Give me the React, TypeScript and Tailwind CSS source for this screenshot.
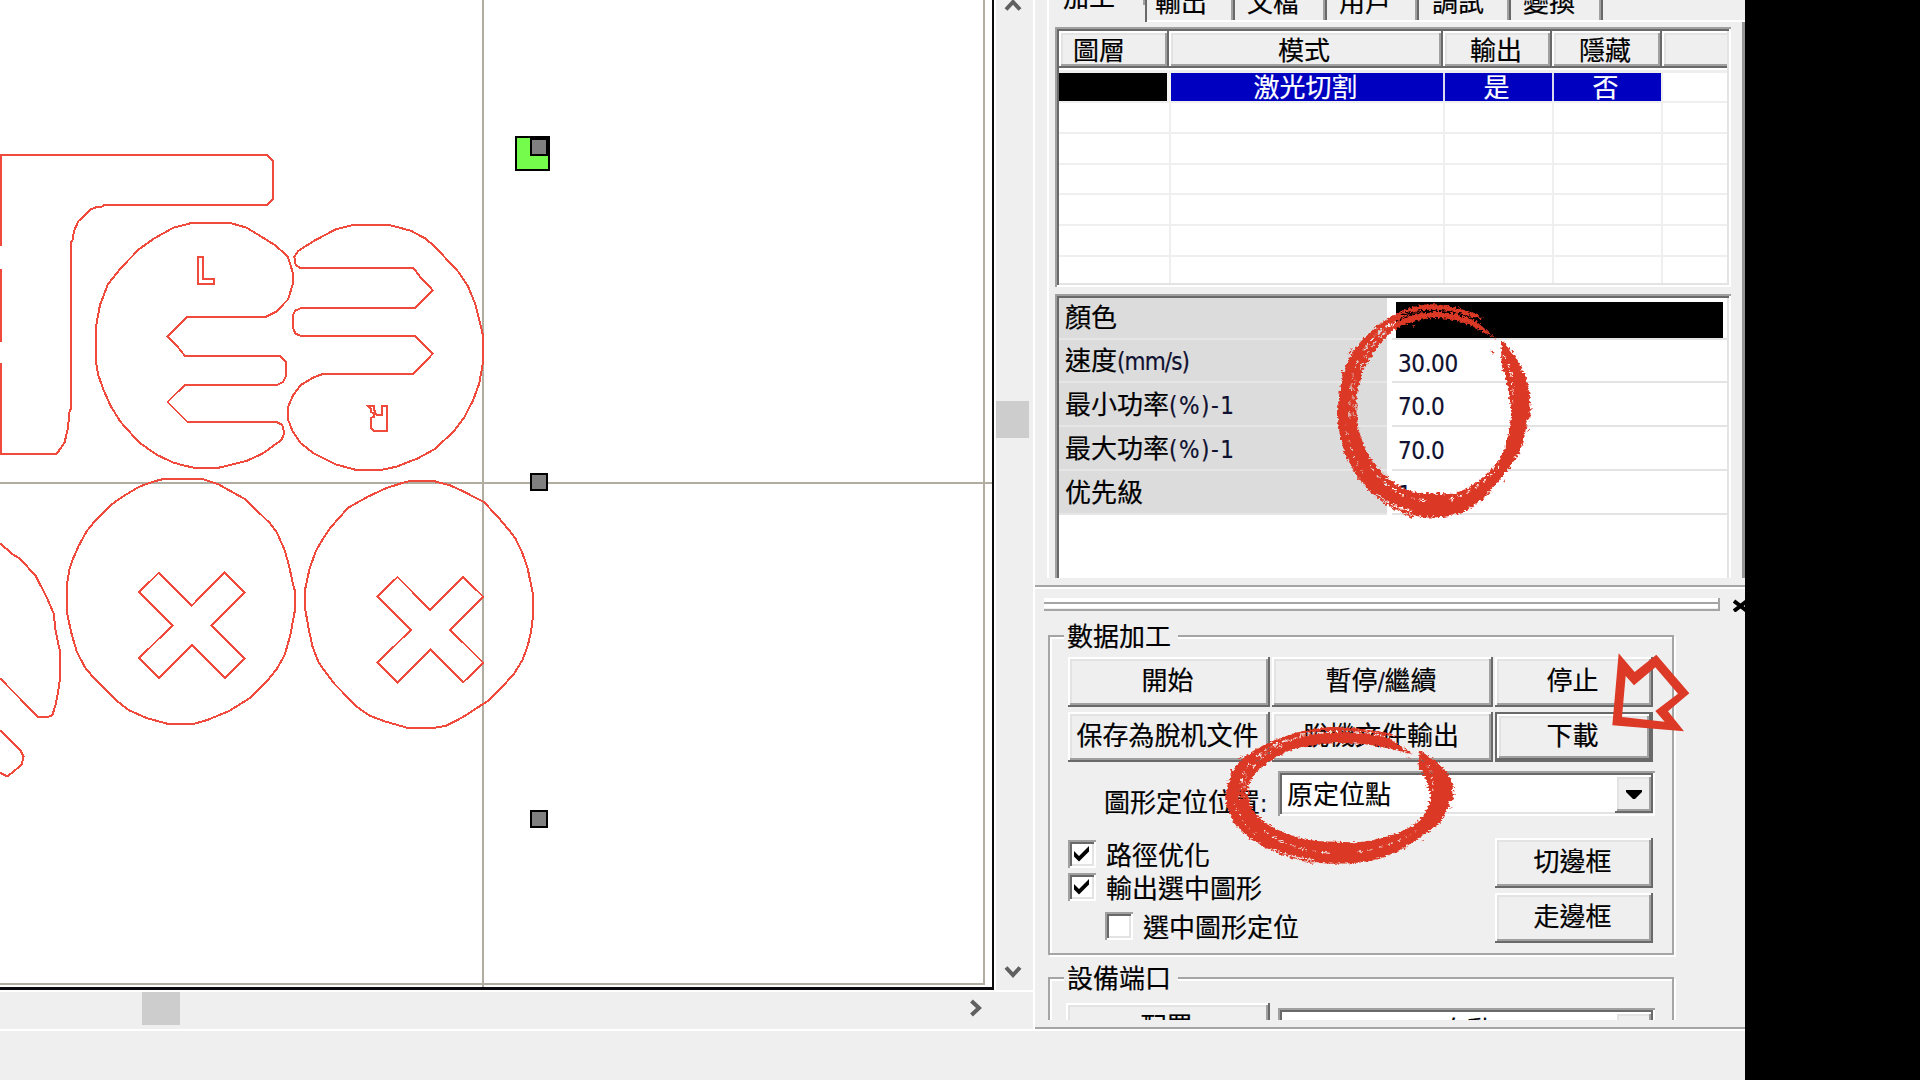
import React from "react";

type Pt = [number, number];

const RAISED =
  "shadow-[inset_-2px_-2px_#696969,inset_2px_2px_#ffffff,inset_-4px_-4px_#a0a0a0,inset_4px_4px_#e3e3e3]";
const SUNKEN =
  "shadow-[inset_2px_2px_#a0a0a0,inset_-2px_-2px_#ffffff,inset_4px_4px_#696969,inset_-4px_-4px_#e3e3e3]";

/* ---------- drawing canvas ---------- */

function Handle({ className }: { className: string }) {
  return <div className={`absolute h-[18px] w-[18px] border-[2.5px] border-black bg-[#808080] ${className}`} />;
}

function Drawing() {
  const ns = { vectorEffect: "non-scaling-stroke" as const };
  const cross =
    "M445,338 L537,437 L629,338 L685,397 L592,496 L685,595 L629,654 L537,555 L445,654 L389,595 L483,496 L389,397Z";
  return (
    <svg
      width="992"
      height="987"
      viewBox="0 0 992 987"
      className="block"
      fill="none"
      stroke="#f04a3c"
      strokeWidth="2"
      shapeRendering="crispEdges"
    >
      <g stroke="#b1ada1" strokeWidth="2">
        <path d="M483,0V987M0,483H992M984,0V984H0" />
      </g>
      <g transform="matrix(0.357143 0 0 0.333333 0 130)">
        <path {...ns} d="M0,346 H4 V74 H747 L765,93 V207 L747,226 H291 L285,230 L268,232 L255,238 L220,273 L207,303 L204,328 L200,335 V835 L195,842 L190,895 L181,937 L163,965 L155,973 H4 V703 H0 M0,421 H4 V633 H0" />
        <path {...ns} d="M746,560 H524 L469,619 L492,643 L518,678 H785 L801,697 V738 L792,756 L778,764 H518 L469,816 L524,875 H772 L790,884 L796,910 L788,930 L735,971 L690,993 L625,1010 L613,1013 H542 L510,1005 L486,998 L440,975 L390,938 L337,875 L310,828 L290,780 L275,735 L268,690 V595 L272,570 L280,525 L302,463 L340,412 L390,357 L432,325 L486,293 L540,278 H642 L690,293 L735,322 L772,347 L806,380 L819,425 V465 L807,508 L772,546 Z" />
        <path {...ns} d="M842,415 L828,405 L824,380 L836,362 L880,332 L940,298 L988,285 H1090 L1150,302 L1190,325 L1216,348 L1283,425 L1310,468 L1330,520 L1342,570 L1352,615 V700 L1342,760 L1325,810 L1300,862 L1270,905 L1216,958 L1170,985 L1110,1010 L1070,1019 H994 L940,1003 L880,971 L842,940 L820,905 L807,870 V830 L820,797 L842,765 L880,741 L907,731 H1158 L1212,671 L1163,619 H844 L827,610 L819,590 V557 L827,542 L844,534 H1163 L1212,481 L1180,445 L1158,415 Z" />
        <path {...ns} d="M555,382 H569 V448 H600 V462 H555 Z" />
        <path {...ns} d="M1031,829 H1046 V838 L1050,844 V850 L1056,856 H1070 V829 H1084 V902 H1047 L1039,895 V864 L1048,860 V852 L1040,846 L1040,838 Z" />
      </g>
      <g transform="matrix(0.357143 0 0 0.333333 0 460)">
        <path {...ns} d="M462,56 H564 L610,72 L687,118 L756,190 L775,217 L797,270 L810,320 L820,370 L825,390 V455 L813,525 L797,585 L775,627 L750,660 L700,714 L640,754 L580,780 L545,791 H468 L410,774 L360,750 L322,718 L262,653 L238,622 L215,575 L200,520 L188,460 V370 L194,330 L203,300 L220,258 L243,213 L265,184 L305,140 L340,112 L390,80 L432,64 Z" />
        <path {...ns} d="M1148,63 H1214 L1260,76 L1295,93 L1355,126 L1395,172 L1425,210 L1443,235 L1463,280 L1478,328 L1487,375 L1493,405 V465 L1487,515 L1478,556 L1463,600 L1440,640 L1415,670 L1370,720 L1295,772 L1250,797 L1214,804 H1142 L1080,785 L1035,767 L1000,741 L935,670 L893,609 L875,560 L865,510 L855,450 V385 L867,325 L885,272 L905,235 L925,203 L950,173 L975,143 L1030,110 L1080,85 L1120,71 Z" />
        <path {...ns} d={cross} />
        <path {...ns} d={cross} transform="translate(668 13)" />
        <path {...ns} d="M0,250 L38,285 L55,295 L100,348 L130,410 L150,460 L156,515 L169,580 V650 L162,700 L156,732 L147,765 L134,771 H107 L0,655 M0,811 L58,872 L66,890 L60,915 L35,937 L20,949 L0,938" />
      </g>
    </svg>
  );
}

function Chevron({ className }: { className: string }) {
  return (
    <svg width="18" height="14" viewBox="0 0 18 14" className={className} fill="none" stroke="#606060" strokeWidth="4">
      <path d="M2,11.5 L9,4 L16,11.5" />
    </svg>
  );
}

function Workspace() {
  return (
    <div className="flex h-[1029px] w-[1033px] flex-col">
      <div className="flex h-[990px]">
        <div className="relative h-[990px] w-[994px] border-b-[3px] border-r-2 border-[#0c0a0c] bg-white">
          <Drawing />
          <div className="absolute left-[515px] top-[136px] h-[35px] w-[35px] border-[2.5px] border-black bg-[#75fb4c]" />
          <Handle className="left-[530px] top-[138px]" />
          <Handle className="left-[530px] top-[473px]" />
          <Handle className="left-[530px] top-[810px]" />
        </div>
        <div className="flex h-full w-[39px] flex-col items-center border-l-2 border-white pr-[4px]">
          <Chevron className="-mt-[2px]" />
          <div className="mt-[389px] h-[37px] w-[33px] bg-[#cdcdcd]" />
          <Chevron className="mt-[527px] rotate-180" />
        </div>
      </div>
      <div className="flex h-[39px] items-start border-t-2 border-white">
        <div className="ml-[142px] h-[33px] w-[38px] bg-[#cdcdcd]" />
        <Chevron className="ml-[787px] mt-[9px] rotate-90" />
      </div>
    </div>
  );
}

/* ---------- upper panel: tabs, layer table, properties ---------- */

const TABS = [
  { label: "輸出", pad: "w-[88px] pl-[8px]" },
  { label: "文檔", pad: "w-[92px] pl-[12px]" },
  { label: "用戶", pad: "w-[92px] pl-[12px]" },
  { label: "調試", pad: "w-[92px] pl-[13px]" },
  { label: "變換", pad: "w-[92px] pl-[12px]" },
];

function TabStrip() {
  return (
    <div className="flex h-[22px]">
      <div className="h-[22px] w-[98px] border-r-2 border-[#696969]">
        <div className="h-full border-r-2 border-[#a0a0a0] pl-[14px]">
          <div className="-mt-[17px]">加工</div>
        </div>
      </div>
      <div className="flex flex-1 border-b-2 border-white">
        {TABS.map((t) => (
          <div key={t.label} className={`h-[20px] shadow-[inset_-2px_0_#696969,inset_-4px_0_#a0a0a0] ${t.pad}`}>
            <div className="-mt-[12px]">{t.label}</div>
          </div>
        ))}
      </div>
    </div>
  );
}

function LayerTable() {
  const rows = ["h-[31px]", "h-[31px]", "h-[30px]", "h-[31px]", "h-[31px]", "h-[28px]"];
  const line = "border-r-2 border-[#efefef]";
  return (
    <div className={`h-[260px] w-[676px] bg-white p-1 ${SUNKEN}`}>
      <div className="grid h-[37px] grid-cols-[110px_274px_109px_110px_65px] bg-[#efefef] leading-[35px]">
        <div className={`pl-[14px] ${RAISED}`}>圖層</div>
        <div className={`pr-[4px] text-center ${RAISED}`}>模式</div>
        <div className={`pr-[3px] text-center ${RAISED}`}>輸出</div>
        <div className={`pr-[4px] text-center ${RAISED}`}>隱藏</div>
        <div className="shadow-[inset_0_-2px_#696969,inset_2px_2px_#ffffff,inset_0_-4px_#a0a0a0,inset_4px_4px_#e3e3e3]" />
      </div>
      <div className="h-[5px] border-b-[3px] border-[#efefef]" />
      <div className="grid h-[28px] grid-cols-[112px_274px_109px_109px_64px] text-center leading-[26px] text-white">
        <div className="border-r-4 border-[#f4f4f4] bg-black" />
        <div className="border-r-2 border-[#d8d8ee] bg-[#0000c0] pr-[3px]">激光切割</div>
        <div className="border-r-2 border-[#d8d8ee] bg-[#0000c0] pr-[4px]">是</div>
        <div className="border-r-2 border-[#efefef] bg-[#0000c0] pr-[4px]">否</div>
      </div>
      {rows.map((h, i) => (
        <div key={i} className={`grid grid-cols-[112px_274px_109px_109px_64px] border-t-2 border-[#efefef] ${h}`}>
          <div className={line} />
          <div className={line} />
          <div className={line} />
          <div className={line} />
        </div>
      ))}
    </div>
  );
}

function Latin({ children, className = "tracking-[-0.4px]" }: { children: React.ReactNode; className?: string }) {
  return (
    <span className={`font-['DejaVu_Sans_Condensed','DejaVu_Sans',sans-serif] text-[24px] text-[#101030] ${className}`}>
      {children}
    </span>
  );
}

const PROPS = [
  { cjk: "顏色", latin: "", spacing: "", value: "", h: "h-[42px] leading-[36px]" },
  { cjk: "速度", latin: "(mm/s)", spacing: "tracking-[-0.9px]", value: "30.00", h: "h-[43px] leading-[38px]" },
  { cjk: "最小功率", latin: "(%)-1", spacing: "tracking-[1.5px]", value: "70.0", h: "h-[44px] leading-[40px]" },
  { cjk: "最大功率", latin: "(%)-1", spacing: "tracking-[1.5px]", value: "70.0", h: "h-[44px] leading-[40px]" },
  { cjk: "优先級", latin: "", spacing: "", value: "1", h: "h-[44px] leading-[39px]" },
];

function PropertyGrid() {
  return (
    <div className="mt-[7px] h-[284px] w-[676px] bg-white pl-1 pt-1 shadow-[inset_2px_2px_#a0a0a0,inset_-2px_0_#ffffff,inset_4px_4px_#696969,inset_-4px_0_#e3e3e3]">
      {PROPS.map((p) => (
        <div key={p.cjk} className={`flex w-[668px] ${p.h}`}>
          <div className="w-[328px] border-b-2 border-[#e6e6e6] bg-[#dcdcdc] pl-[6px]">
            {p.cjk}
            <Latin className={p.spacing}>{p.latin}</Latin>
          </div>
          <div className="ml-[5px] flex-1 border-b-2 border-[#e3e3e3] pl-[6px] leading-[42px]">
            {p.value ? <Latin>{p.value}</Latin> : <div className="-ml-[2px] mt-[4px] h-[36px] w-[327px] bg-black" />}
          </div>
        </div>
      ))}
    </div>
  );
}

/* ---------- lower panel: job controls ---------- */

function PushButton({ children, className = "" }: { children: React.ReactNode; className?: string }) {
  return (
    <button className={`h-[50px] overflow-hidden pr-[3px] text-center leading-[44px] ${RAISED} ${className}`}>
      <span className="block h-[50px]">{children}</span>
    </button>
  );
}

function CheckBox({ checked, label, className }: { checked?: boolean; label: string; className: string }) {
  return (
    <label className={`flex h-[28px] items-center ${className}`}>
      <span className={`flex h-[28px] w-[28px] items-center justify-center bg-white ${SUNKEN}`}>
        {checked && (
          <svg width="16" height="16" viewBox="0 0 16 16" fill="#000">
            <path d="M0,5 L5,10 L15,0 V5.5 L5,15.5 L0,10.5 Z" />
          </svg>
        )}
      </span>
      <span className="-mt-px ml-[10px]">{label}</span>
    </label>
  );
}

function Combo({ children, className = "" }: { children: React.ReactNode; className?: string }) {
  return (
    <div className={`flex h-[45px] w-[377px] bg-white p-1 ${SUNKEN} ${className}`}>
      <div className="flex-1">{children}</div>
      <div className={`-mr-[2px] flex h-[38px] w-[38px] items-center justify-center bg-[#efefef] ${RAISED}`}>
        <svg width="16" height="9" viewBox="0 0 16 9">
          <path d="M0,0H16V2L9,9H7L0,2Z" />
        </svg>
      </div>
    </div>
  );
}

function GroupBox({ title, className, children }: { title: string; className: string; children: React.ReactNode }) {
  return (
    <fieldset className={`relative w-[626px] border-2 border-white ${className}`}>
      <div className="absolute -left-[4px] -top-[4px] bottom-0 right-0 border-2 border-[#a5a5a5]" />
      <div className="absolute -top-[17px] left-[12px] z-10 h-[28px] w-[114px] bg-[#efefef] pl-[3px] leading-[26px]">{title}</div>
      <div className="relative">{children}</div>
    </fieldset>
  );
}

function ControlPanel() {
  return (
    <div className="h-[431px] overflow-hidden">
      <div className="mt-[9px] flex items-start pl-[9px]">
        <div className="flex h-[13px] w-[676px] flex-col border-r-2 border-[#a5a5a5]">
          <div className="h-[6px] border-b-2 border-t-4 border-b-[#a5a5a5] border-t-white" />
          <div className="h-[7px] border-b-2 border-t-[4px] border-b-[#a5a5a5] border-t-white" />
        </div>
        <svg width="12" height="13" viewBox="0 0 12 13" className="ml-[13px] mt-px" stroke="#000" strokeWidth="4">
          <path d="M1,2 L14,12 M1,12 L14,2" />
        </svg>
      </div>

      <GroupBox title="數据加工" className="ml-[15px] mt-[25px] h-[320px]">
        <div className="ml-[16px] grid grid-cols-[202px_221px_158px] gap-x-[2px] gap-y-[5px] pt-[18px]">
          <PushButton>開始</PushButton>
          <PushButton>暫停<Latin>/</Latin>繼續</PushButton>
          <PushButton>停止</PushButton>
          <PushButton>保存為脫机文件</PushButton>
          <PushButton>脫機文件輸出</PushButton>
          <button className="h-[50px] border-2 border-[#696969] pb-[7px] pr-[3px] leading-[39px] shadow-[inset_-2px_-2px_#696969,inset_2px_2px_#ffffff,inset_-4px_-4px_#a0a0a0,inset_4px_4px_#e3e3e3]">
            下載
          </button>
        </div>
        <div className="ml-[52px] mt-[9px] flex h-[45px]">
          <div className="w-[174px] pt-[17px]">圖形定位位置<Latin>:</Latin></div>
          <Combo>
            <div className="pl-[5px] leading-[35px]">原定位點</div>
          </Combo>
        </div>
        <div className="ml-[16px] mt-[22px] flex justify-between pr-[21px]">
          <div className="flex flex-col pt-[2px]">
            <CheckBox checked label="路徑优化" className="" />
            <CheckBox checked label="輸出選中圖形" className="mt-[5px]" />
            <CheckBox label="選中圖形定位" className="ml-[37px] mt-[11px]" />
          </div>
          <div className="flex w-[158px] flex-col gap-[5px]">
            <PushButton>切邊框</PushButton>
            <PushButton>走邊框</PushButton>
          </div>
        </div>
      </GroupBox>

      <GroupBox title="設備端口" className="ml-[15px] mt-[22px] h-[120px]">
        <div className="flex pl-[14px] pt-[22px]">
          <PushButton className="mr-[8px] w-[204px]">配置</PushButton>
          <Combo className="mt-[5px]">
            <div className="pl-[159px] leading-[34px]">自動</div>
          </Combo>
        </div>
      </GroupBox>
    </div>
  );
}

/* ---------- hand-drawn annotations ---------- */

/* Smooth path through the given points (Catmull-Rom to Bézier). */
function smooth(pts: Pt[]): string {
  let d = "";
  for (let i = 0; i < pts.length - 1; i++) {
    const a = pts[Math.max(0, i - 1)];
    const b = pts[i];
    const c = pts[i + 1];
    const e = pts[Math.min(pts.length - 1, i + 2)];
    d += `C${b[0] + (c[0] - a[0]) / 6},${b[1] + (c[1] - a[1]) / 6} ${c[0] - (e[0] - b[0]) / 6},${c[1] - (e[1] - b[1]) / 6} ${c[0]},${c[1]}`;
  }
  return d;
}

const OUTER: Pt[] = [
  [492, 116], [440, 92], [345, 73], [280, 80], [215, 108], [150, 155], [95, 220], [64, 300], [53, 400], [65, 490],
  [100, 570], [150, 632], [215, 682], [290, 706], [350, 710], [410, 700], [470, 668], [540, 595], [600, 510],
  [620, 430], [631, 400], [622, 310], [592, 240], [545, 183],
];
const INNER: Pt[] = [
  [542, 235], [562, 320], [572, 400], [560, 480], [530, 548], [470, 605], [400, 638], [330, 638], [260, 628],
  [200, 590], [145, 525], [117, 450], [108, 380], [118, 300], [152, 230], [212, 157], [270, 128], [345, 114],
  [430, 128], [528, 176],
];

/* `squash` pulls the inner edge toward the centre, so a flattened ring keeps its stroke weight. */
function BrushRing({ id, className, squash = 1 }: { id: string; className: string; squash?: number }) {
  const inner = INNER.map(([x, y]): Pt => [x, 384 + (y - 384) * squash]);
  const ring = `M${OUTER[0]}${smooth(OUTER)}L${inner[0]}${smooth(inner)}L470,126 L440,108Z`;
  return (
    <svg viewBox="50 72 582 640" preserveAspectRatio="none" className={`absolute overflow-visible ${className}`}>
      <defs>
        <filter id={`${id}-rough`} x="-5%" y="-5%" width="110%" height="110%">
          <feTurbulence type="fractalNoise" baseFrequency="0.12" numOctaves="3" seed="4" result="n" />
          <feDisplacementMap in="SourceGraphic" in2="n" scale="18" xChannelSelector="R" yChannelSelector="G" />
        </filter>
        <mask id={`${id}-gaps`} maskUnits="userSpaceOnUse" x="0" y="0" width="700" height="800">
          <rect width="700" height="800" fill="#fff" />
          <g fill="none" stroke="#000" strokeLinecap="round">
            <path d="M478,126 C430,98 340,78 245,105" strokeWidth="6" strokeDasharray="70 8 40 5" />
            <path d="M330,96 C270,100 240,115 215,135" strokeWidth="4" strokeDasharray="25 9" />
            <path d="M208,133 C170,160 145,185 128,215" strokeWidth="5" strokeDasharray="14 12 24 8" />
            <path d="M195,158 C150,195 130,230 120,270" strokeWidth="3" strokeDasharray="20 18" />
            <path d="M112,240 C92,290 86,340 89,430" strokeWidth="3" strokeDasharray="20 26 12 20" />
            <path d="M104,300 C97,340 98,380 99,410" strokeWidth="2" strokeDasharray="10 14" />
            <path d="M76,430 C85,500 110,550 135,590" strokeWidth="3" strokeDasharray="3 22" />
            <path d="M150,555 C190,615 240,652 330,664" strokeWidth="4" strokeDasharray="18 20 10 14" />
            <path d="M168,640 C210,675 240,684 275,692" strokeWidth="4" strokeDasharray="44 9" />
            <path d="M390,655 C450,640 500,600 535,560" strokeWidth="3" strokeDasharray="8 18 16 14" />
            <path d="M550,225 C575,270 580,310 578,370" strokeWidth="3" strokeDasharray="14 18 8 14" />
          </g>
        </mask>
      </defs>
      <g filter={`url(#${id}-rough)`} fill="#dc3926">
        <path d={ring} mask={`url(#${id}-gaps)`} />
        <path d="M510,208l8,5l2,9l-8,-6zM232,138l10,-7l-6,12zM275,137l7,-3l-4,8zM622,450l5,-2l-2,7zM500,640l14,-8l-10,12zM470,660l24,-10l-10,12zM548,605l10,-6l-4,8zM240,697l40,10l-6,4zM85,215l10,-9l-8,18zM64,280l8,-12l-2,22z" />
      </g>
    </svg>
  );
}

function ArrowMark() {
  return (
    <svg width="78" height="79" viewBox="815 219 234 237" className="absolute left-[1612px] top-[653px]">
      <path
        fill="#dc3926"
        fillRule="evenodd"
        d="M835,220 L883,276 L948,224 L1047,340 L983,394 L1031,454 L816,436Z M856,288 L881,316 L945,262 L1013,341 L945,393 L973,425 L845,411Z"
      />
    </svg>
  );
}

export default function App() {
  return (
    <div className="relative h-[1080px] w-[1920px] overflow-hidden bg-black font-['Noto_Sans_CJK_TC','Noto_Sans_CJK_SC',sans-serif] text-[26px] leading-[26px] text-black [-webkit-text-stroke:0.2px]">
      <div className="h-[1080px] w-[1745px] overflow-hidden whitespace-nowrap bg-[#efefef]">
        <div className="flex h-[1029px]">
          <Workspace />
          <div className="w-[712px] border-l-2 border-white">
            <div className="h-[585px] pl-[12px]">
              <div className="h-[578px] border-l-2 border-white">
                <TabStrip />
                <div className="h-[556px] border-r-[3px] border-[#969696] pl-[6px] pt-[5px]">
                  <LayerTable />
                  <PropertyGrid />
                </div>
              </div>
            </div>
            <div className="h-[4px] border-b-2 border-t-2 border-b-white border-t-[#a5a5a5]" />
            <ControlPanel />
            <div className="mt-[7px] h-[2px] bg-[#a5a5a5]" />
          </div>
        </div>
        <div className="h-[2px] bg-white" />
      </div>
      <BrushRing id="values" className="left-[1337px] top-[304px] h-[214px] w-[194px]" />
      <BrushRing id="origin" squash={0.88} className="left-[1225px] top-[727px] h-[137px] w-[229px]" />
      <ArrowMark />
    </div>
  );
}
